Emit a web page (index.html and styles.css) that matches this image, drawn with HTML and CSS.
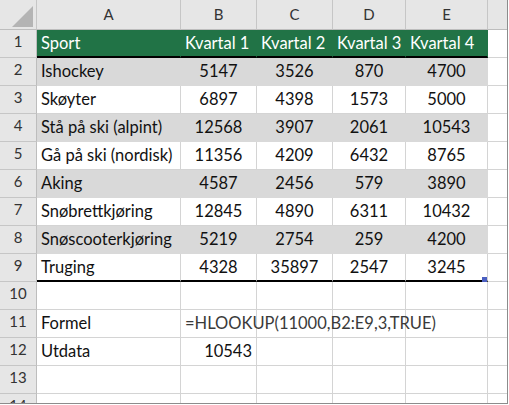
FILE: index.html
```html
<!DOCTYPE html>
<html lang="nb">
<head>
  <meta charset="UTF-8">
  <meta name="viewport" content="width=device-width, initial-scale=1.0">
  <title>FINN.KOLONNE</title>
  <link rel="stylesheet" href="styles.css">
</head>
<body>
  <div class="sheet">
    <table class="grid">
      <colgroup>
        <col class="col-row">
        <col class="col-a">
        <col class="col-b">
        <col class="col-c">
        <col class="col-d">
        <col class="col-e">
        <col class="col-f">
      </colgroup>
      <thead>
        <tr class="letters">
          <th class="corner">
            <svg width="21" height="21" viewBox="0 0 21 21"><polygon points="21,0 21,21 0,21" fill="#b4b4b4"/></svg>
          </th>
          <th>A</th>
          <th>B</th>
          <th>C</th>
          <th>D</th>
          <th>E</th>
          <th class="last-col"></th>
        </tr>
      </thead>
      <tbody>
        <tr class="title">
          <th class="rownum">1</th>
          <td>Sport</td>
          <td>Kvartal 1</td>
          <td>Kvartal 2</td>
          <td>Kvartal 3</td>
          <td>Kvartal 4</td>
          <td class="last-col"></td>
        </tr>
        <tr class="band">
          <th class="rownum">2</th>
          <td>Ishockey</td>
          <td class="num">5147</td>
          <td class="num">3526</td>
          <td class="num">870</td>
          <td class="num">4700</td>
          <td class="last-col"></td>
        </tr>
        <tr>
          <th class="rownum">3</th>
          <td>Skøyter</td>
          <td class="num">6897</td>
          <td class="num">4398</td>
          <td class="num">1573</td>
          <td class="num">5000</td>
          <td class="last-col"></td>
        </tr>
        <tr class="band">
          <th class="rownum">4</th>
          <td>Stå på ski (alpint)</td>
          <td class="num">12568</td>
          <td class="num">3907</td>
          <td class="num">2061</td>
          <td class="num">10543</td>
          <td class="last-col"></td>
        </tr>
        <tr>
          <th class="rownum">5</th>
          <td>Gå på ski (nordisk)</td>
          <td class="num">11356</td>
          <td class="num">4209</td>
          <td class="num">6432</td>
          <td class="num">8765</td>
          <td class="last-col"></td>
        </tr>
        <tr class="band">
          <th class="rownum">6</th>
          <td>Aking</td>
          <td class="num">4587</td>
          <td class="num">2456</td>
          <td class="num">579</td>
          <td class="num">3890</td>
          <td class="last-col"></td>
        </tr>
        <tr>
          <th class="rownum">7</th>
          <td>Snøbrettkjøring</td>
          <td class="num">12845</td>
          <td class="num">4890</td>
          <td class="num">6311</td>
          <td class="num">10432</td>
          <td class="last-col"></td>
        </tr>
        <tr class="band">
          <th class="rownum">8</th>
          <td>Snøscooterkjøring</td>
          <td class="num">5219</td>
          <td class="num">2754</td>
          <td class="num">259</td>
          <td class="num">4200</td>
          <td class="last-col"></td>
        </tr>
        <tr class="closing">
          <th class="rownum">9</th>
          <td>Truging</td>
          <td class="num">4328</td>
          <td class="num">35897</td>
          <td class="num">2547</td>
          <td class="num handle-cell">3245<span class="fill-handle"></span></td>
          <td class="last-col"></td>
        </tr>
        <tr>
          <th class="rownum">10</th>
          <td></td><td></td><td></td><td></td><td></td>
          <td class="last-col"></td>
        </tr>
        <tr>
          <th class="rownum">11</th>
          <td>Formel</td>
          <td class="formula" colspan="4"><span>=HLOOKUP(11000,B2:E9,3,TRUE)</span><i class="gl gl-c"></i><i class="gl gl-d"></i><i class="gl gl-e"></i></td>
          <td class="last-col"></td>
        </tr>
        <tr>
          <th class="rownum">12</th>
          <td>Utdata</td>
          <td class="result">10543</td>
          <td></td><td></td><td></td>
          <td class="last-col"></td>
        </tr>
        <tr>
          <th class="rownum">13</th>
          <td></td><td></td><td></td><td></td><td></td>
          <td class="last-col"></td>
        </tr>
        <tr>
          <th class="rownum">14</th>
          <td></td><td></td><td></td><td></td><td></td>
          <td class="last-col"></td>
        </tr>
      </tbody>
    </table>
  </div>
</body>
</html>
```

FILE: styles.css
```css
* {
  box-sizing: border-box;
}

body {
  margin: 0;
  background-color: white;
  font-family: Lato, "Liberation Sans", sans-serif;
}

.sheet {
  width: 508px;
  height: 404px;
  border-right: 1px solid #8c8c8c;
  border-bottom: 1px solid #8c8c8c;
  overflow: hidden;
}

.grid {
  width: 507px;
  table-layout: fixed;
  border-collapse: separate;
  border-spacing: 0;
}

.col-row { width: 37px; }
.col-a { width: 144px; }
.col-b { width: 76px; }
.col-c { width: 76px; }
.col-d { width: 73px; }
.col-e { width: 82px; }
.col-f { width: 19px; }

th, td {
  padding: 0 4px 4px;
  border-right: 1px solid #d4d4d4;
  border-bottom: 1px solid #d4d4d4;
  vertical-align: bottom;
  white-space: nowrap;
  font-size: 16.5px;
  line-height: 20px;
  color: #111;
  text-align: left;
  font-weight: normal;
}

tr {
  height: 28px;
}

.letters {
  height: 30px;
}

.letters th {
  background-color: #e6e6e6;
  border-right-color: #c6c6c6;
  border-bottom-color: #bdbdbd;
  text-align: center;
  font-size: 15px;
  color: #333;
  padding-bottom: 5px;
}

.letters .corner {
  padding: 0;
  text-align: right;
  vertical-align: bottom;
}

.corner svg {
  display: block;
  margin: 0 3px 2px auto;
}

.rownum {
  background-color: #e6e6e6;
  border-right-color: #bdbdbd;
  border-bottom-color: #c6c6c6;
  text-align: center;
  font-size: 15px;
  color: #333;
  padding: 0 0 6px;
}

.last-col {
  border-right: none;
}

.title td {
  background-color: #217346;
  border-right-color: #217346;
  border-bottom: 2px solid #000;
  color: white;
  padding-bottom: 3px;
}

.title td.last-col {
  background-color: white;
  border-bottom: 1px solid #d4d4d4;
}

.band td {
  background-color: #d9d9d9;
  border-right-color: #d9d9d9;
  border-bottom-color: #d9d9d9;
}

.band td.last-col {
  background-color: white;
  border-bottom-color: #d4d4d4;
}

.closing td {
  border-bottom: 2px solid #000;
  padding-bottom: 3px;
}

.closing td.last-col {
  border-bottom: 1px solid #d4d4d4;
}

.num {
  text-align: center;
}

.result {
  text-align: right;
}

.handle-cell {
  position: relative;
}

.fill-handle {
  position: absolute;
  right: 0;
  bottom: -2px;
  width: 5px;
  height: 5px;
  background-color: #4a5fc1;
}

.formula {
  position: relative;
  border-right-color: #d4d4d4;
  color: #3a3a3a;
}

.formula span {
  position: relative;
  z-index: 1;
}

/* gridlines still run under the overflowing formula */
.gl {
  position: absolute;
  top: 0;
  bottom: -1px;
  width: 1px;
  background-color: #d4d4d4;
}

.gl-c { left: 75px; }
.gl-d { left: 151px; }
.gl-e { left: 224px; }
```
